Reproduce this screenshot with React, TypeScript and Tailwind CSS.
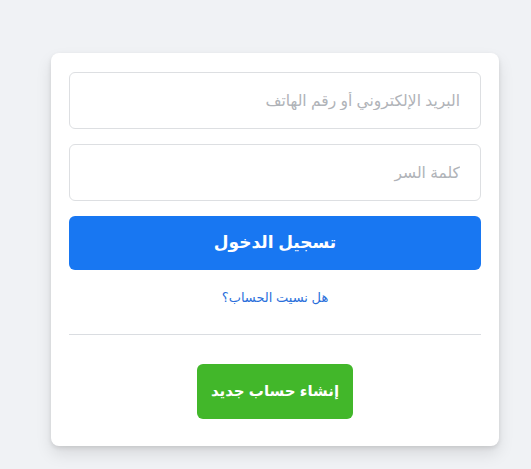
import React from "react";

export default function App() {
  return (
    <div
      className="min-h-screen w-full bg-[#f0f2f5] pt-[53px] pl-[51px]"
      style={{ fontFamily: '"Liberation Sans", Arial, "DejaVu Sans", sans-serif' }}
    >
      <div
        dir="rtl"
        className="w-[448px] rounded-lg bg-white px-[18px] pt-[19px] pb-[27px] shadow-[0_2px_4px_rgba(0,0,0,0.1),0_8px_16px_rgba(0,0,0,0.1)]"
      >
        <div className="flex flex-col gap-[15px]">
          <input
            type="text"
            placeholder="البريد الإلكتروني أو رقم الهاتف"
            className="h-[57px] w-full rounded-md border border-[#dddfe2] bg-white px-5 text-[15.5px] text-[#1c1e21] outline-none placeholder:text-[#b0b3b8]"
          />
          <input
            type="password"
            placeholder="كلمة السر"
            className="h-[57px] w-full rounded-md border border-[#dddfe2] bg-white px-5 text-[15.5px] text-[#1c1e21] outline-none placeholder:text-[#b0b3b8]"
          />
          <button className="h-[54px] w-full rounded-md bg-[#1877f2] text-[17px] font-bold text-white">
            تسجيل الدخول
          </button>
        </div>
        <div className="mt-[18px] text-center text-[13px] leading-[20px]">
          <a href="#" className="text-[#2a6fdb]">
            هل نسيت الحساب؟
          </a>
        </div>
        <div className="mt-[26px] h-px w-full bg-[#dadde1]" />
        <div className="mt-[29px] flex justify-center">
          <button className="h-[55px] w-[156px] rounded-md bg-[#42b72a] text-[15px] font-bold text-white">
            إنشاء حساب جديد
          </button>
        </div>
      </div>
    </div>
  );
}
